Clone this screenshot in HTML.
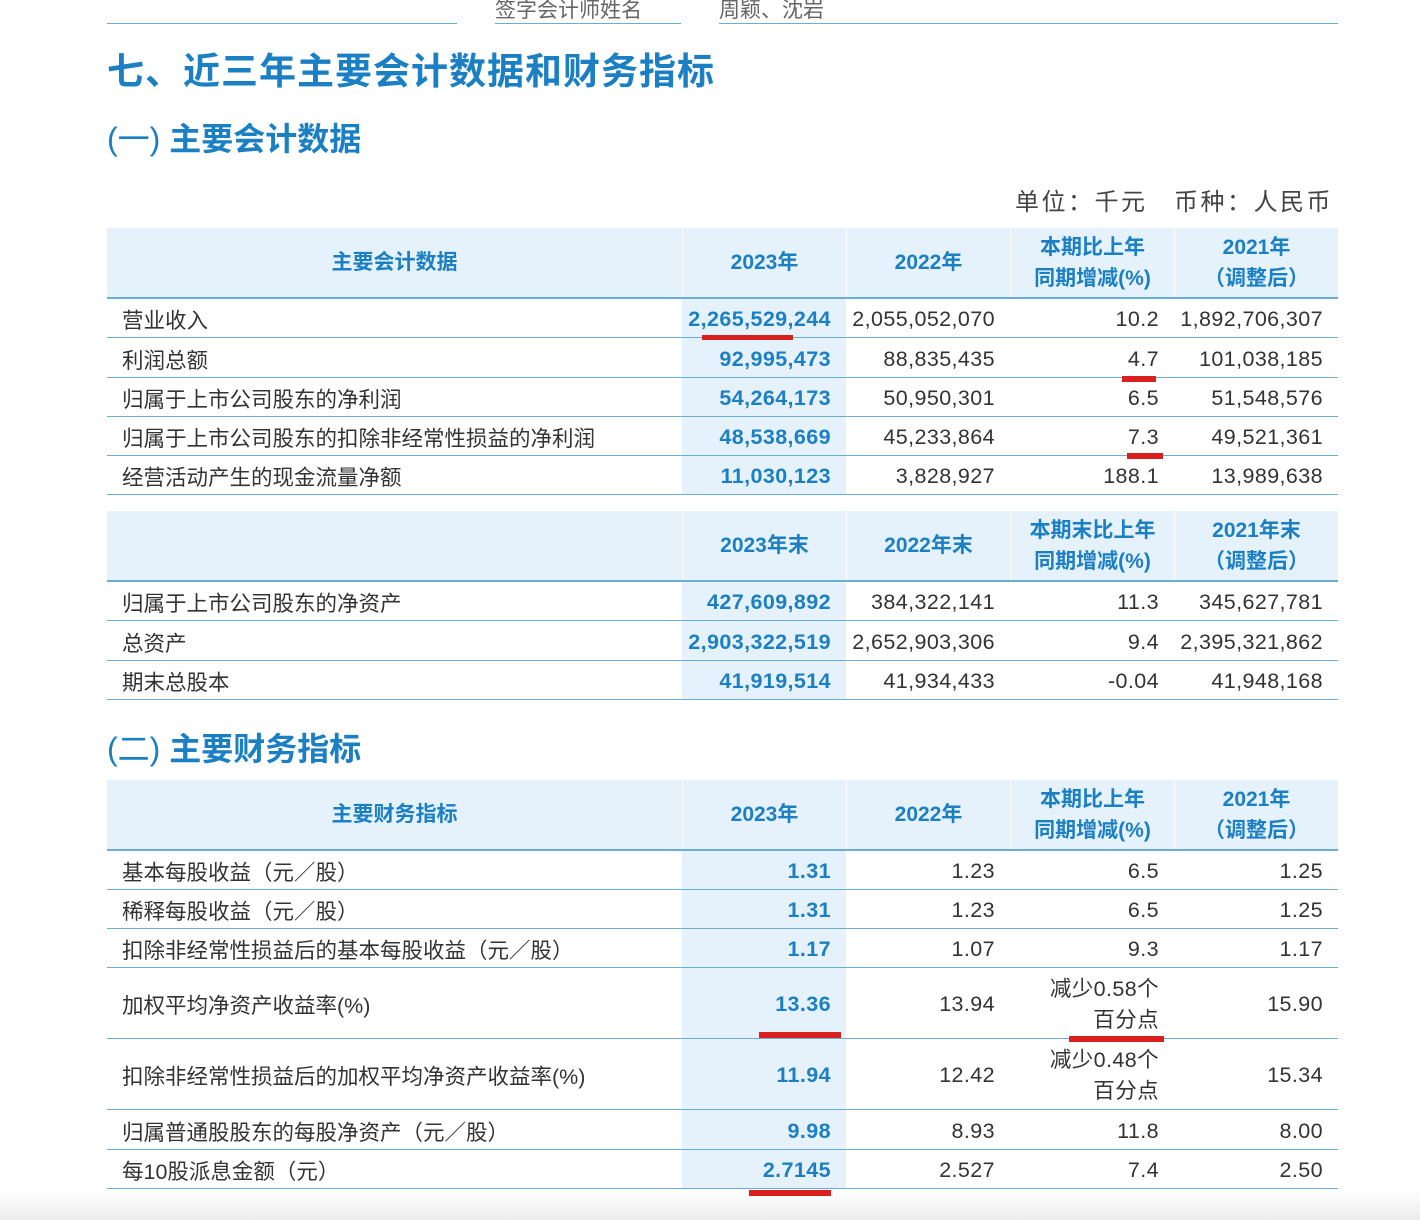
<!DOCTYPE html>
<html><head><meta charset="utf-8"><style>
*{margin:0;padding:0;box-sizing:border-box}
body{width:1420px;height:1220px;background:#fff;position:relative;overflow:hidden;font-family:"Liberation Sans","Noto Sans CJK SC",sans-serif;color:#333}
.a{position:absolute}
.row{position:absolute;left:107px;width:1231px;display:flex;border-bottom:1.5px solid #6aaed6}
.row>div{display:flex;align-items:center;font-size:21.5px;padding-top:3px}
.c0{width:575px;padding-left:15px}
.c1,.c2,.c3,.c4{width:164px;justify-content:flex-end;padding-right:15px;letter-spacing:0.4px}
.c1{background:#e6f2fb;color:#1b7fc4;font-weight:bold}
.hd{border-bottom:2px solid #6aaed6}
.hd>div{background:#e6f2fb;color:#1b7fc4;font-weight:bold;justify-content:center !important;padding:0 !important;text-align:center;line-height:31px;border-left:1px solid #fff;font-size:21px;letter-spacing:0}
.hd>div:first-child{border-left:none}
.red{position:absolute;background:#d9201f}
.tt{color:#1b7fc4;font-weight:bold}
.two{flex-direction:column;align-items:flex-end !important;justify-content:center;line-height:31px}
</style></head><body>
<div class="a" style="left:107px;top:23px;width:350px;border-top:1.5px solid #6aaed6"></div>
<div class="a" style="left:495px;top:23px;width:186px;border-top:1.5px solid #6aaed6"></div>
<div class="a" style="left:719px;top:23px;width:619px;border-top:1.5px solid #6aaed6"></div>
<div class="a" style="left:495px;top:-6px;font-size:21px;color:#666">签字会计师姓名</div>
<div class="a" style="left:719px;top:-6px;font-size:21px;color:#666">周颖、沈岩</div>
<div class="a tt" style="left:107px;top:41px;font-size:37px;letter-spacing:1px">七、近三年主要会计数据和财务指标</div>
<div class="a tt" style="left:107px;top:114px;font-size:32px;font-weight:normal">(一) <b>主要会计数据</b></div>
<div class="a" style="left:1015px;top:182px;font-size:24px;color:#444;letter-spacing:2.5px">单位：千元　币种：人民币</div>

<div class="row hd" style="top:228px;height:71px"><div class="c0">主要会计数据</div><div class="c1">2023年</div><div class="c2">2022年</div><div class="c3">本期比上年<br>同期增减(%)</div><div class="c4">2021年<br>（调整后）</div></div>
<div class="row" style="top:299px;height:39px"><div class="c0">营业收入</div><div class="c1">2,265,529,244</div><div class="c2">2,055,052,070</div><div class="c3">10.2</div><div class="c4">1,892,706,307</div></div>
<div class="row" style="top:338px;height:40px"><div class="c0">利润总额</div><div class="c1">92,995,473</div><div class="c2">88,835,435</div><div class="c3">4.7</div><div class="c4">101,038,185</div></div>
<div class="row" style="top:378px;height:39px"><div class="c0">归属于上市公司股东的净利润</div><div class="c1">54,264,173</div><div class="c2">50,950,301</div><div class="c3">6.5</div><div class="c4">51,548,576</div></div>
<div class="row" style="top:417px;height:39px"><div class="c0">归属于上市公司股东的扣除非经常性损益的净利润</div><div class="c1">48,538,669</div><div class="c2">45,233,864</div><div class="c3">7.3</div><div class="c4">49,521,361</div></div>
<div class="row" style="top:456px;height:39px"><div class="c0">经营活动产生的现金流量净额</div><div class="c1">11,030,123</div><div class="c2">3,828,927</div><div class="c3">188.1</div><div class="c4">13,989,638</div></div>

<div class="row hd" style="top:511px;height:71px"><div class="c0"></div><div class="c1">2023年末</div><div class="c2">2022年末</div><div class="c3">本期末比上年<br>同期增减(%)</div><div class="c4">2021年末<br>（调整后）</div></div>
<div class="row" style="top:582px;height:39px"><div class="c0">归属于上市公司股东的净资产</div><div class="c1">427,609,892</div><div class="c2">384,322,141</div><div class="c3">11.3</div><div class="c4">345,627,781</div></div>
<div class="row" style="top:621px;height:40px"><div class="c0">总资产</div><div class="c1">2,903,322,519</div><div class="c2">2,652,903,306</div><div class="c3">9.4</div><div class="c4">2,395,321,862</div></div>
<div class="row" style="top:661px;height:39px"><div class="c0">期末总股本</div><div class="c1">41,919,514</div><div class="c2">41,934,433</div><div class="c3">-0.04</div><div class="c4">41,948,168</div></div>

<div class="a tt" style="left:107px;top:724px;font-size:32px;font-weight:normal">(二) <b>主要财务指标</b></div>

<div class="row hd" style="top:780px;height:71px"><div class="c0">主要财务指标</div><div class="c1">2023年</div><div class="c2">2022年</div><div class="c3">本期比上年<br>同期增减(%)</div><div class="c4">2021年<br>（调整后）</div></div>
<div class="row" style="top:851px;height:39px"><div class="c0">基本每股收益（元／股）</div><div class="c1">1.31</div><div class="c2">1.23</div><div class="c3">6.5</div><div class="c4">1.25</div></div>
<div class="row" style="top:890px;height:39px"><div class="c0">稀释每股收益（元／股）</div><div class="c1">1.31</div><div class="c2">1.23</div><div class="c3">6.5</div><div class="c4">1.25</div></div>
<div class="row" style="top:929px;height:39px"><div class="c0">扣除非经常性损益后的基本每股收益（元／股）</div><div class="c1">1.17</div><div class="c2">1.07</div><div class="c3">9.3</div><div class="c4">1.17</div></div>
<div class="row" style="top:968px;height:71px"><div class="c0">加权平均净资产收益率(%)</div><div class="c1">13.36</div><div class="c2">13.94</div><div class="c3 two"><span>减少0.58个</span><span>百分点</span></div><div class="c4">15.90</div></div>
<div class="row" style="top:1039px;height:71px"><div class="c0">扣除非经常性损益后的加权平均净资产收益率(%)</div><div class="c1">11.94</div><div class="c2">12.42</div><div class="c3 two"><span>减少0.48个</span><span>百分点</span></div><div class="c4">15.34</div></div>
<div class="row" style="top:1110px;height:40px"><div class="c0">归属普通股股东的每股净资产（元／股）</div><div class="c1">9.98</div><div class="c2">8.93</div><div class="c3">11.8</div><div class="c4">8.00</div></div>
<div class="row" style="top:1150px;height:39px"><div class="c0">每10股派息金额（元）</div><div class="c1">2.7145</div><div class="c2">2.527</div><div class="c3">7.4</div><div class="c4">2.50</div></div>

<div class="a" style="left:0;top:1190px;width:1420px;height:30px;background:linear-gradient(#fff,#ececec)"></div>

<div class="red" style="left:702px;top:335px;width:91px;height:5px"></div>
<div class="red" style="left:1122px;top:376px;width:34px;height:6px"></div>
<div class="red" style="left:1127px;top:453px;width:36px;height:6px"></div>
<div class="red" style="left:759px;top:1032px;width:82px;height:6px"></div>
<div class="red" style="left:1069px;top:1036px;width:95px;height:6px"></div>
<div class="red" style="left:749px;top:1190px;width:82px;height:6px"></div>
</body></html>
